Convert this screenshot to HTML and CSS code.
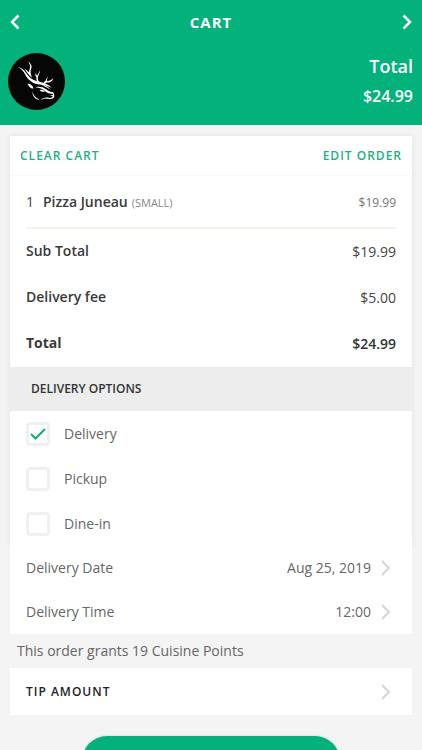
FILE: index.html
```
<!DOCTYPE html>
<html lang="en">

<head>
    <meta charset="UTF-8">
    <meta name="viewport" content="width=device-width, initial-scale=1.0">
    <title>Cart</title>
    <link rel="stylesheet" href="styles.css">
</head>

<body>
    <header class="header">
        <div class="navbar">
            <button type="button" class="nav-button" aria-label="Back">
                <svg width="10" height="16" viewBox="0 0 10 16"><path d="M8.500 1.500L2 8L8.500 14.500"/></svg>
            </button>
            <h1 class="title">CART</h1>
            <button type="button" class="nav-button" aria-label="Next">
                <svg width="10" height="16" viewBox="0 0 10 16"><path d="M1.500 1.500L8 8L1.500 14.500"/></svg>
            </button>
        </div>
        <div class="summary">
            <svg class="logo" viewBox="24 22 170 170" role="img" aria-label="Restaurant logo">
                <circle cx="109" cy="107" r="85"/>
                <!-- antlers -->
                <path class="fill" d="M53 64C64 66 72 72 78 82C86 94 96 103 111 106C128 109 143 114 155 126C140 119 128 117 113 115C94 112 82 99 75 86C70 76 63 68 53 64Z"/>
                <path class="fill" d="M84 47C92 53 97 61 93 69C90 77 91 85 96 96C85 88 80 79 73 68C81 73 84 78 87 80C86 74 90 67 90 62C90 57 87 52 84 47Z"/>
                <path class="fill" d="M120 73C119 83 114 89 113 95C112 102 115 107 122 112C111 109 107 102 109 94C105 90 105 87 107 82C108 87 110 89 111 90C114 84 117 80 120 73Z"/>
                <path class="fill" d="M143 91C141 100 139 102 141 106C148 105 155 101 159 97C156 108 148 110 140 110L133 114C130 114 129 112 131 109L136 105C138 100 140 96 143 91Z"/>
                <!-- head -->
                <path class="fill" d="M82 113C91 114 98 119 100 128C92 129 86 123 82 113Z"/>
                <path class="fill" d="M96 137C100 147 106 156 117 161C106 162 98 152 96 137Z"/>
                <path class="fill" d="M106 124C117 121 128 123 138 130C145 135 148 138 159 139C162 145 164 151 160 156C151 162 139 157 131 158L122 163C127 155 134 154 142 155C149 157 156 156 158 152L146 147C157 149 158 149 158 144C145 143 139 139 134 135C127 129 118 125 106 124Z"/>
                <path class="fill" d="M118 132C125 130 131 132 135 137C127 138 122 137 118 132Z"/>
                <path class="fill" d="M123 118C134 118 145 122 151 132C143 125 135 122 123 118Z"/>
            </svg>
            <div class="summary-total">
                <div class="summary-label">Total</div>
                <div class="summary-amount">$24.99</div>
            </div>
        </div>
    </header>

    <main class="content">
        <section class="card">
            <div class="card-actions">
                <button type="button" class="text-button">CLEAR CART</button>
                <button type="button" class="text-button">EDIT ORDER</button>
            </div>
            <div class="item">
                <span class="item-qty">1</span>
                <span class="item-name">Pizza Juneau</span>
                <span class="item-size">(SMALL)</span>
                <span class="item-price">$19.99</span>
            </div>
            <dl class="totals">
                <div class="totals-row">
                    <dt>Sub Total</dt>
                    <dd>$19.99</dd>
                </div>
                <div class="totals-row">
                    <dt>Delivery fee</dt>
                    <dd>$5.00</dd>
                </div>
                <div class="totals-row grand">
                    <dt>Total</dt>
                    <dd>$24.99</dd>
                </div>
            </dl>
            <h2 class="section-title">DELIVERY OPTIONS</h2>
            <label class="option">
                <input type="checkbox" name="delivery" checked>
                <svg class="checkmark" width="16" height="12" viewBox="0 0 16 12"><path d="M1 6L5.500 10.500L15 1"/></svg>
                Delivery
            </label>
            <label class="option">
                <input type="checkbox" name="pickup">
                Pickup
            </label>
            <label class="option">
                <input type="checkbox" name="dinein">
                Dine-in
            </label>
        </section>

        <section class="links">
            <button type="button" class="link-row">
                <span>Delivery Date</span>
                <span class="link-value">Aug 25, 2019</span>
                <svg class="chevron" width="10" height="16" viewBox="0 0 10 16"><path d="M1 1L8 8L1 15"/></svg>
            </button>
            <button type="button" class="link-row">
                <span>Delivery Time</span>
                <span class="link-value">12:00</span>
                <svg class="chevron" width="10" height="16" viewBox="0 0 10 16"><path d="M1 1L8 8L1 15"/></svg>
            </button>
        </section>

        <p class="points">This order grants 19 Cuisine Points</p>

        <section class="links">
            <button type="button" class="link-row tip">
                <span class="link-title">TIP AMOUNT</span>
                <svg class="chevron" width="10" height="16" viewBox="0 0 10 16"><path d="M1 1L8 8L1 15"/></svg>
            </button>
        </section>

        <button type="button" class="checkout" aria-label="Checkout"></button>
    </main>
</body>

</html>
```
FILE: styles.css
```
* {
    box-sizing: border-box;
}

body {
    margin: 0;
    height: 100vh;
    display: flex;
    flex-direction: column;
    font-family: "Open Sans", sans-serif;
    font-size: 14px;
    line-height: 20px;
    color: #666;
    background-color: #f4f4f4;
}

button {
    margin: 0;
    padding: 0;
    border: none;
    background: none;
    font: inherit;
    color: inherit;
    cursor: pointer;
}

svg {
    display: block;
    flex: none;
    fill: none;
}

.header {
    flex: none;
    padding-bottom: 15px;
    color: #fff;
    background-color: #03b17b;
}

.navbar {
    display: flex;
    align-items: center;
    justify-content: space-between;
    height: 44px;
    padding: 0 10px;
}

.nav-button svg {
    stroke: #fff;
    stroke-width: 2.5;
}

.title {
    margin: 0;
    font-size: 15px;
    font-weight: 700;
    letter-spacing: 1px;
}

.summary {
    display: flex;
    justify-content: space-between;
    padding: 9px 9px 0 8px;
}

.logo {
    width: 57px;
    height: 57px;
}

.logo circle {
    fill: #060606;
}

.logo .fill {
    fill: #fff;
}

.summary-total {
    text-align: right;
    font-weight: 600;
}

.summary-label {
    font-size: 18px;
    line-height: 26px;
}

.summary-amount {
    padding-top: 5px;
    font-size: 16px;
    line-height: 24px;
}

.content {
    flex: 1;
    min-height: 0;
    overflow-y: auto;
    scrollbar-width: none;
    padding: 11px 10px 20px;
}

.card {
    background-color: #fff;
    box-shadow: 0 0 6px rgba(0, 0, 0, 0.08);
}

.card-actions {
    display: flex;
    justify-content: space-between;
    align-items: center;
    height: 40px;
    padding: 0 10px;
    border-bottom: 1px solid #fafafa;
}

.text-button {
    font-size: 12px;
    font-weight: 600;
    letter-spacing: 1px;
    color: #1fae80;
}

.item {
    display: flex;
    align-items: baseline;
    margin: 0 16px;
    padding: 16px 0 14px;
    border-bottom: 2px solid #f3f3ea;
}

.item-qty {
    width: 17px;
    color: #444;
}

.item-name {
    margin-right: 4px;
    font-weight: 600;
    color: #3a3a3a;
}

.item-size {
    font-size: 11px;
    color: #888;
}

.item-price {
    margin-left: auto;
    font-size: 12px;
    color: #777;
}

.totals {
    margin: 0;
    padding: 0 16px;
}

.totals-row {
    display: flex;
    justify-content: space-between;
    align-items: center;
    height: 46px;
    color: #3a3a3a;
}

.totals-row dt {
    padding-bottom: 2px;
    font-weight: 600;
}

.totals-row dd {
    margin: 0;
    color: #444;
}

.totals-row.grand dt {
    font-weight: 700;
}

.totals-row.grand dd {
    font-weight: 600;
    color: #333;
}

.section-title {
    margin: 0;
    padding: 12px 21px;
    font-size: 12px;
    font-weight: 600;
    color: #333;
    background-color: #ededed;
}

.option {
    position: relative;
    display: flex;
    align-items: center;
    gap: 14px;
    height: 45px;
    padding: 0 16px;
    cursor: pointer;
}

.option input {
    appearance: none;
    width: 24px;
    height: 24px;
    margin: 0;
    border: 3px solid #f0f0f0;
    border-radius: 4px;
    background-color: #fff;
}

.checkmark {
    position: absolute;
    left: 20px;
    display: none;
    stroke: #12ab78;
    stroke-width: 2;
}

.option input:checked + .checkmark {
    display: block;
}

.links {
    background-color: #fff;
    position: relative;
}

.link-row {
    display: flex;
    align-items: center;
    justify-content: space-between;
    width: 100%;
    height: 44px;
    padding: 0 21px 0 16px;
}

.link-value {
    margin-left: auto;
    margin-right: 10px;
}

.link-title {
    font-size: 12px;
    font-weight: 600;
    letter-spacing: 1px;
    color: #222;
}

.chevron {
    stroke: #d4d4d4;
    stroke-width: 2;
}

.points {
    margin: 0;
    padding: 7px;
}

.tip {
    height: 47px;
}

.checkout {
    display: block;
    width: 64%;
    height: 50px;
    margin: 21px auto 0;
    border-radius: 25px;
    background-color: #03b17b;
    box-shadow: 0 0 3px rgba(0, 0, 0, 0.15);
}
```
